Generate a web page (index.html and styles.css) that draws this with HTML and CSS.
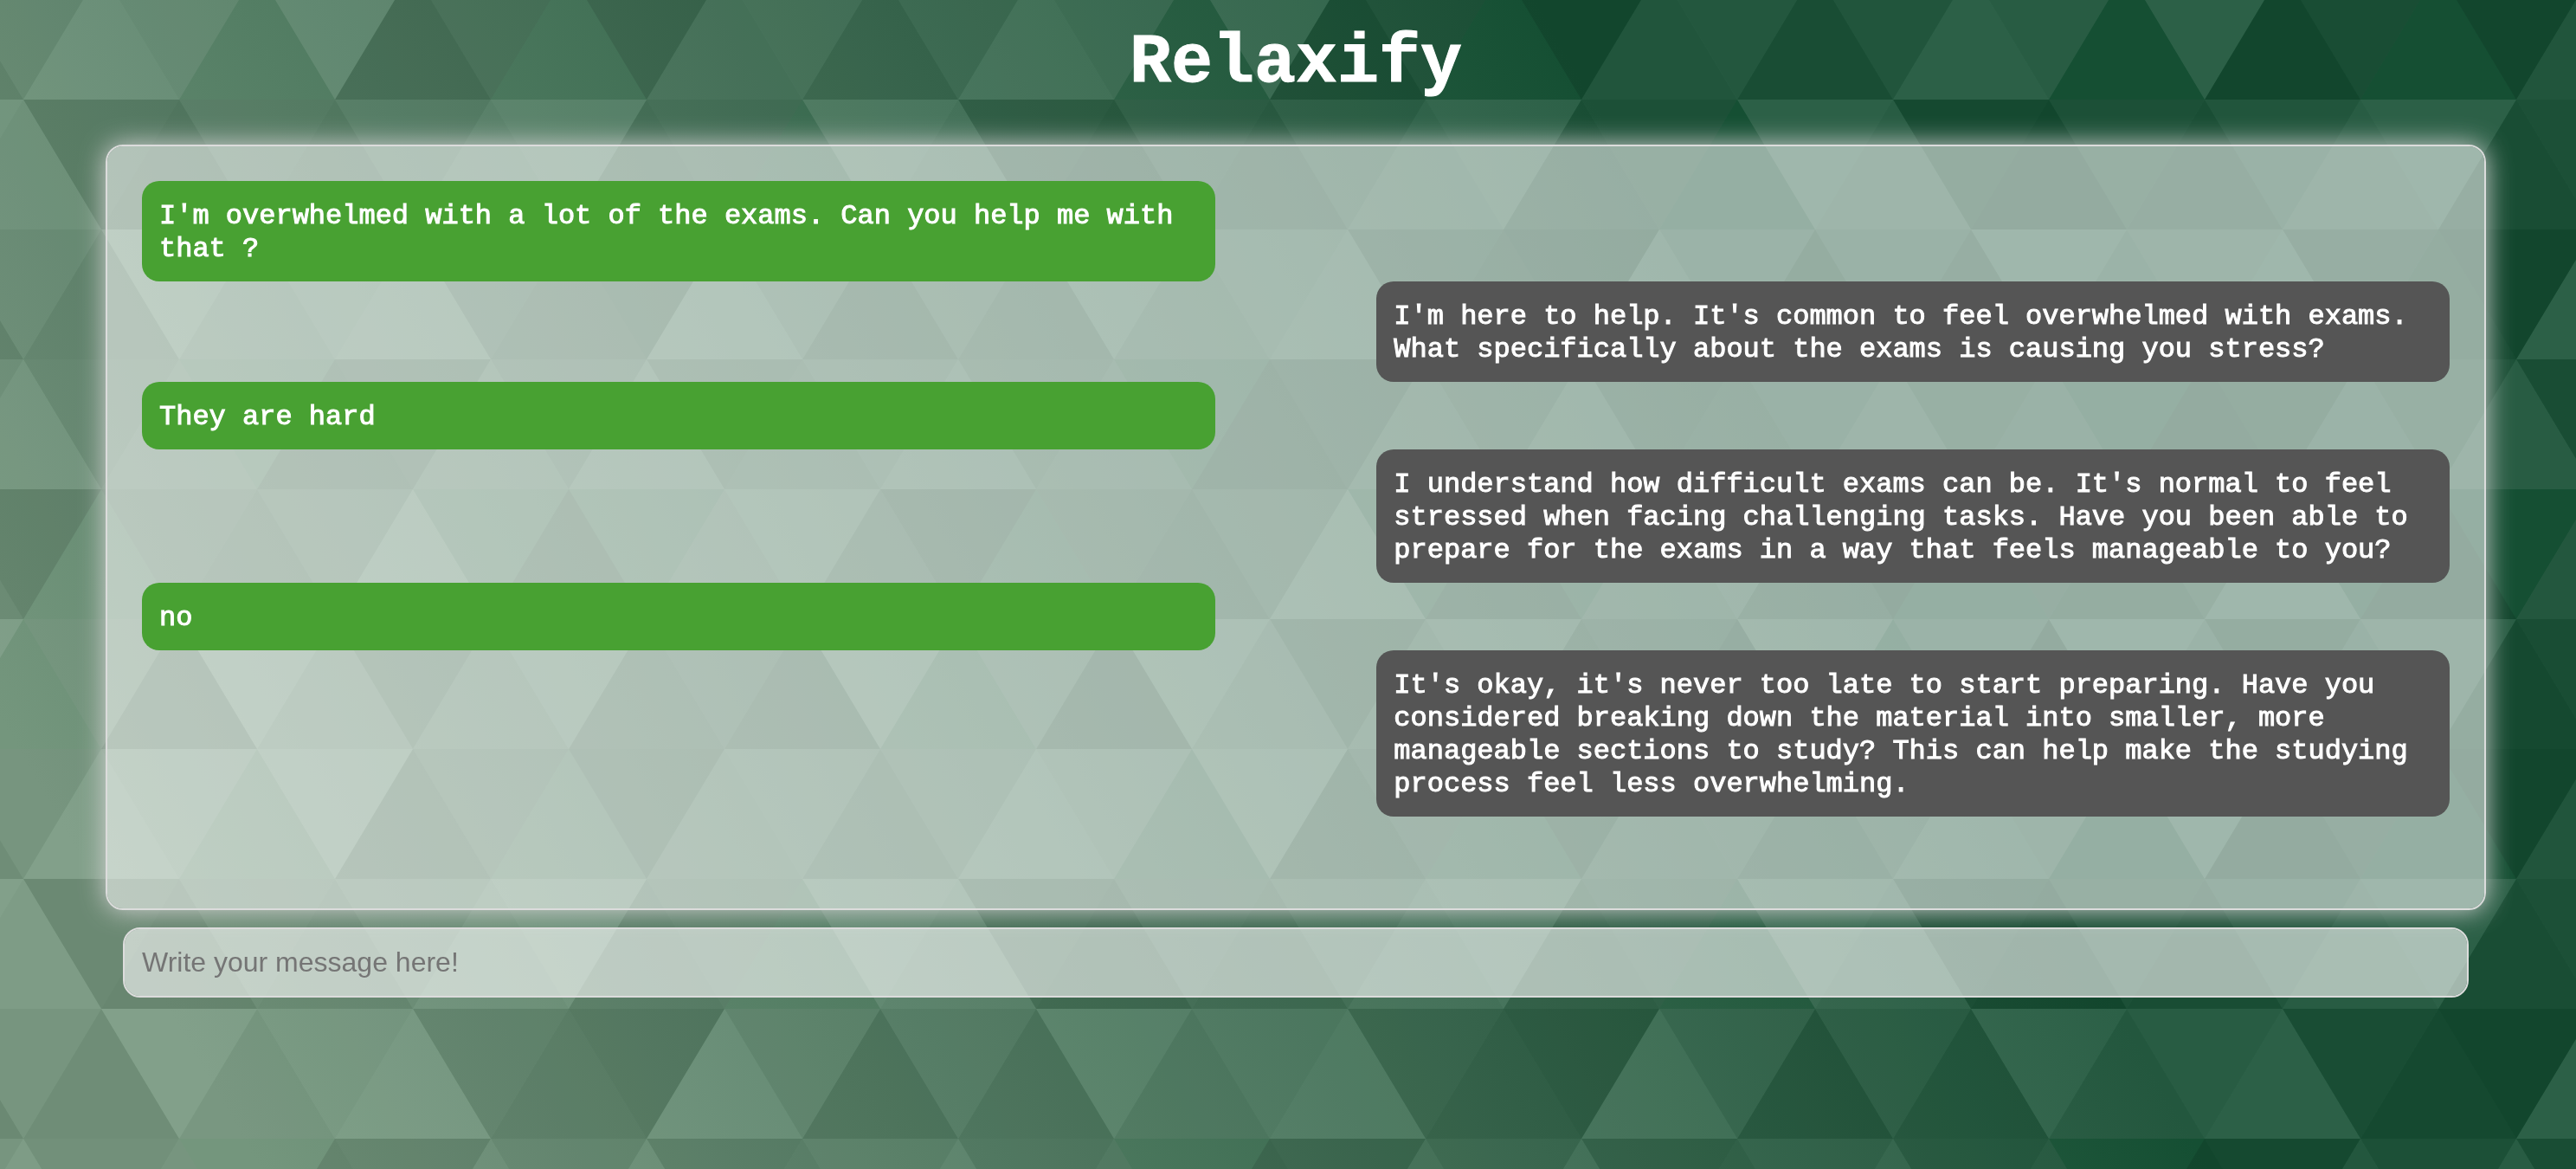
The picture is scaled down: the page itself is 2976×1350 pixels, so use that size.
FILE: index.html
```html
<!DOCTYPE html>
<html lang="en">
<head>
  <meta charset="utf-8">
  <meta name="viewport" content="width=device-width, initial-scale=1">
  <title>Relaxify</title>
  <link rel="stylesheet" href="styles.css">
</head>
<body>
  <svg class="backdrop" aria-hidden="true">
    <defs>
      <pattern id="prism" patternUnits="userSpaceOnUse" x="657" y="865" width="1080" height="900">
        <g fill-opacity="0.1">
          <path fill="#000" d="M90 150l90-150h-180zM630 150l90 150h-180zM900 0l90 150h-180zM90 450l90-150h-180zM810 450l90 150h-180zM0 600l90 150h-180zM1080 600l90 150h-180zM450 750l90-150h-180zM270 750l90 150h-180zM630 750l90 150h-180z"/>
          <path fill="#222" d="M540 300l90-150h-180zM0 300l90 150h-180zM1080 300l90 150h-180zM360 300l90 150h-180zM900 600l90-150h-180zM720 600l90 150h-180zM90 750l90 150h-180zM900 900l90-150h-180z"/>
          <path fill="#444" d="M990 150l90-150h-180zM90 150l90 150h-180zM810 150l90 150h-180zM360 0l90 150h-180zM540 300l90 150h-180zM990 450l90-150h-180zM180 600l90-150h-180zM360 600l90 150h-180zM630 750l90-150h-180zM180 900l90-150h-180z"/>
          <path fill="#666" d="M180 300l90-150h-180zM720 300l90-150h-180zM270 450l90 150h-180zM0 600l90-150h-180zM1080 600l90-150h-180zM540 600l90-150h-180zM810 750l90-150h-180z"/>
          <path fill="#999" d="M450 150l90-150h-180zM180 0l90 150h-180zM900 300l90-150h-180zM450 450l90-150h-180zM630 450l90 150h-180zM360 600l90-150h-180zM990 750l90 150h-180z"/>
          <path fill="#aaa" d="M270 150l90-150h-180zM720 300l90 150h-180zM270 450l90-150h-180zM990 450l90 150h-180zM180 600l90 150h-180zM810 750l90 150h-180zM540 900l90-150h-180z"/>
          <path fill="#ddd" d="M630 150l90-150h-180zM450 150l90 150h-180zM990 150l90 150h-180zM810 450l90-150h-180zM90 450l90 150h-180zM450 450l90 150h-180zM270 750l90-150h-180zM0 900l90-150h-180zM1080 900l90-150h-180z"/>
          <path fill="#fff" d="M810 150l90-150h-180zM540 0l90 150h-180zM0 300l90-150h-180zM1080 300l90-150h-180zM360 300l90-150h-180zM180 300l90 150h-180zM900 300l90 150h-180zM630 450l90-150h-180zM900 600l90 150h-180zM360 900l90-150h-180zM720 900l90-150h-180z"/>
        </g>
      </pattern>
    </defs>
    <rect width="100%" height="100%" fill="url(#prism)"/>
  </svg>

  <main class="app">
    <h1 class="title">Relaxify</h1>

    <section class="chat" aria-label="Conversation">
      <p class="message message--user">I'm overwhelmed with a lot of the exams. Can you help me with that ?</p>
      <p class="message message--bot">I'm here to help. It's common to feel overwhelmed with exams. What specifically about the exams is causing you stress?</p>
      <p class="message message--user">They are hard</p>
      <p class="message message--bot">I understand how difficult exams can be. It's normal to feel stressed when facing challenging tasks. Have you been able to prepare for the exams in a way that feels manageable to you?</p>
      <p class="message message--user">no</p>
      <p class="message message--bot">It's okay, it's never too late to start preparing. Have you considered breaking down the material into smaller, more manageable sections to study? This can help make the studying process feel less overwhelming.</p>
    </section>

    <form class="composer">
      <input class="composer__input" type="text" aria-label="Message" placeholder="Write your message here!">
    </form>
  </main>
</body>
</html>
```

FILE: styles.css
```css
* {
  box-sizing: border-box;
}

body {
  margin: 0;
  min-height: 100vh;
  background: linear-gradient(60deg, #74967d 8%, #154f33 68%) fixed;
  color: #fff;
  font-family: "Liberation Mono", monospace;
  font-size: 32px;
  line-height: 38px;
}

.backdrop {
  position: fixed;
  inset: 0;
  z-index: -1;
  width: 100%;
  height: 100%;
}

.app {
  display: flex;
  flex-direction: column;
  padding: 28px 104px 40px 122px;
}

.title {
  margin: 0 0 49px;
  font-size: 80px;
  line-height: 90px;
  text-align: center;
  -webkit-text-stroke: 1px;
}

.chat {
  display: flex;
  flex-direction: column;
  min-height: 884px;
  padding: 40px;
  border: 2px solid #dcdcdc;
  border-radius: 20px;
  background: rgba(255, 255, 255, 0.55);
  background-clip: padding-box;
  box-shadow: 0 0 30px #d3d3d3;
}

.message {
  box-sizing: content-box;
  width: 45%;
  margin: 0;
  padding: 22px 20px 18px;
  border-radius: 20px;
  -webkit-text-stroke: 1px;
}

.message--user {
  align-self: flex-start;
  background: #48a132;
}

.message--bot {
  align-self: flex-end;
  background: #555;
}

.composer {
  display: flex;
  padding: 20px;
}

.composer__input {
  flex: 1;
  min-width: 0;
  padding: 20px;
  border: 2px solid #dcdcdc;
  border-radius: 20px;
  background: rgba(255, 255, 255, 0.6);
  background-clip: padding-box;
  color: #333;
  font: 32px "Liberation Sans", Arial, sans-serif;
}

.composer__input::placeholder {
  color: #757575;
}
```
